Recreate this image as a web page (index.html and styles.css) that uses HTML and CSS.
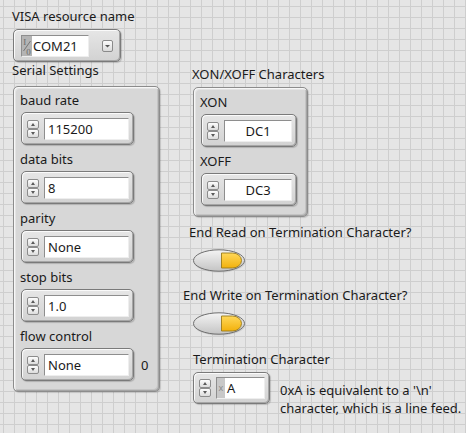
FILE: index.html
```html
<!DOCTYPE html>
<html>
<head>
<meta charset="utf-8">
<link rel="stylesheet" href="styles.css">
</head>
<body>
<div class="panel">
  <div class="left">
    <div class="label">VISA resource name</div>
    <div class="ctl visa">
      <div class="field visa-field">
        <span class="io"><svg width="10" height="20" viewBox="0 0 10 20"><text x="1.2" y="9" class="io-t">I</text><line x1="1.5" y1="15" x2="8.5" y2="5" stroke="#6e6e6e" stroke-width="0.9"/><text x="4.3" y="18.5" class="io-t">0</text></svg></span>
        <span class="txt">COM21</span>
      </div>
      <span class="dd"><svg width="9" height="10" viewBox="0 0 9 10"><path d="M2 4 H7 L4.5 6.6 Z" fill="#555"/></svg></span>
    </div>
    <div class="label">Serial Settings</div>
    <div class="cluster serial">
      <div class="item">
        <div class="label">baud rate</div>
        <div class="ctl num w113"><span class="spin"><b class="btn up"></b><b class="btn down"></b></span><span class="field">115200</span></div>
      </div>
      <div class="item">
        <div class="label">data bits</div>
        <div class="ctl num w113"><span class="spin"><b class="btn up"></b><b class="btn down"></b></span><span class="field">8</span></div>
      </div>
      <div class="item">
        <div class="label">parity</div>
        <div class="ctl num w113"><span class="spin"><b class="btn up"></b><b class="btn down"></b></span><span class="field">None</span></div>
      </div>
      <div class="item">
        <div class="label">stop bits</div>
        <div class="ctl num w113"><span class="spin"><b class="btn up"></b><b class="btn down"></b></span><span class="field">1.0</span></div>
      </div>
      <div class="item">
        <div class="label">flow control</div>
        <div class="row">
          <div class="ctl num w113"><span class="spin"><b class="btn up"></b><b class="btn down"></b></span><span class="field">None</span></div>
          <span class="zero">0</span>
        </div>
      </div>
    </div>
  </div>
  <div class="right">
    <div class="label xlabel">XON/XOFF Characters</div>
    <div class="cluster xon">
      <div class="item">
        <div class="label">XON</div>
        <div class="ctl num w96"><span class="spin"><b class="btn up"></b><b class="btn down"></b></span><span class="field center">DC1</span></div>
      </div>
      <div class="item">
        <div class="label">XOFF</div>
        <div class="ctl num w96"><span class="spin"><b class="btn up"></b><b class="btn down"></b></span><span class="field center">DC3</span></div>
      </div>
    </div>
    <div class="label endread">End Read on Termination Character?</div>
    <div class="toggle"><svg width="54" height="25" viewBox="0 0 54 25">
      <defs>
        <linearGradient id="tg" x1="0" y1="0" x2="0" y2="1"><stop offset="0" stop-color="#f4f4f4"/><stop offset="1" stop-color="#c4c4c4"/></linearGradient>
        <linearGradient id="yg" x1="0" y1="0" x2="0" y2="1"><stop offset="0" stop-color="#ffd85a"/><stop offset="1" stop-color="#f2b10c"/></linearGradient>
      </defs>
      <ellipse cx="26.5" cy="12.5" rx="26" ry="11" fill="#b8b8b8" opacity="0.5"/>
      <ellipse cx="26" cy="11.5" rx="25.5" ry="10.7" fill="url(#tg)" stroke="#6e6e6e" stroke-width="1"/>
      <path d="M28.5 4 H39.5 A 9 7.5 0 0 1 39.5 19 H28.5 Z" fill="url(#yg)" stroke="#9a7a1a" stroke-width="0.9"/>
    </svg></div>
    <div class="label endwrite">End Write on Termination Character?</div>
    <div class="toggle"><svg width="54" height="25" viewBox="0 0 54 25">
      <ellipse cx="26.5" cy="12.5" rx="26" ry="11" fill="#b8b8b8" opacity="0.5"/>
      <ellipse cx="26" cy="11.5" rx="25.5" ry="10.7" fill="url(#tg)" stroke="#6e6e6e" stroke-width="1"/>
      <path d="M28.5 4 H39.5 A 9 7.5 0 0 1 39.5 19 H28.5 Z" fill="url(#yg)" stroke="#9a7a1a" stroke-width="0.9"/>
    </svg></div>
    <div class="label termlabel">Termination Character</div>
    <div class="termrow">
      <div class="ctl num w77"><span class="spin"><b class="btn up"></b><b class="btn down"></b></span><span class="field hex"><span class="radix">x</span>A</span></div>
      <div class="note">0xA is equivalent to a '\n'<br>character, which is a line feed.</div>
    </div>
  </div>
</div>
</body>
</html>
```

FILE: styles.css
```css
* { box-sizing: border-box; }
html, body { margin: 0; padding: 0; }
body {
  width: 466px;
  height: 433px;
  overflow: hidden;
  background-color: #e5e5e5;
  background-image:
    linear-gradient(to right, #cecece 1px, transparent 1px),
    linear-gradient(to bottom, #cecece 1px, transparent 1px);
  background-size: 11px 11px;
  background-position: 3px 6px;
  font-family: "Noto Sans", "Open Sans", sans-serif;
  font-size: 13px;
  color: #1a1a1a;
}
.panel {
  display: flex;
  padding: 8px 0 0 12px;
}
.left {
  width: 148px;
  display: flex;
  flex-direction: column;
}
.label {
  line-height: 16px;
  white-space: nowrap;
}
.ctl {
  display: flex;
  align-items: center;
  height: 33px;
  border: 1px solid #7a7a7a;
  border-radius: 5px;
  background: linear-gradient(#e6e6e6, #d2d2d2);
  box-shadow: inset 1px 1px 0 #fafafa, inset -1px -1px 0 #a6a6a6, 1px 1px 1px rgba(0,0,0,0.18);
}
.visa {
  margin: 5px 0 0 1px;
  width: 108px;
  padding: 0 6px 0 7px;
}
.visa-field {
  display: flex;
  align-items: center;
  width: 68px;
  height: 22px;
  padding: 0;
}
.io {
  width: 10px;
  height: 20px;
  background: #b4b4b4;
  display: block;
  flex: none;
}
.io svg { display: block; }
.io-t {
  font-family: "Liberation Serif", serif;
  font-size: 9px;
  fill: #6a6a6a;
}
.visa-field .txt { padding-left: 1px; }
.dd {
  margin-left: auto;
  margin-right: 1px;
  width: 11px;
  height: 12px;
  border: 1px solid #8a8a8a;
  border-radius: 2px;
  background: linear-gradient(#fbfbfb, #dadada);
  display: flex;
  align-items: center;
  justify-content: center;
}
.dd svg { display: block; }
.cluster {
  border: 1px solid #8c8c8c;
  border-radius: 5px;
  background: #d7d7d7;
  box-shadow: inset 1px 1px 0 #f7f7f7, inset 2px 2px 0 #e4e4e4, inset -1px -1px 0 #a4a4a4, inset -2px -2px 0 #c4c4c4, 1px 1px 1px rgba(0,0,0,0.15);
  display: flex;
  flex-direction: column;
  gap: 6px;
}
.serial {
  margin: 8px 0 0 1px;
  width: 147px;
  height: 306px;
  padding: 5px 0 0 6px;
}
.item {
  display: flex;
  flex-direction: column;
  gap: 4px;
}
.cluster .ctl { margin-left: 1px; }
.num { padding: 0 4px 0 5px; }
.w113 { width: 113px; }
.w96 { width: 96px; }
.w77 { width: 77px; }
.spin {
  display: flex;
  flex-direction: column;
  gap: 0;
  flex: none;
  margin-right: 5px;
}
.btn {
  display: block;
  width: 12px;
  height: 9px;
  border: 1px solid #8c8c8c;
  border-radius: 2px;
  background: linear-gradient(#fdfdfd, #dcdcdc);
  position: relative;
}
.btn::after {
  content: "";
  position: absolute;
  left: 3px;
  width: 0;
  height: 0;
  border-left: 2.5px solid transparent;
  border-right: 2.5px solid transparent;
}
.up::after { top: 2px; border-bottom: 3px solid #5a5a5a; }
.down::after { top: 2px; border-top: 3px solid #5a5a5a; }
.field {
  flex: 1;
  height: 22px;
  background: #fff;
  border-top: 1px solid #8e8e8e;
  border-left: 1px solid #8e8e8e;
  border-bottom: 1px solid #eeeeee;
  border-right: 1px solid #eeeeee;
  padding-left: 3px;
  line-height: 20px;
  white-space: nowrap;
  overflow: hidden;
}
.visa-field {
  flex: none;
  padding-left: 0;
}
.field.center { text-align: center; padding-left: 0; }
.field.hex { padding-left: 0; display: flex; }
.radix {
  width: 8px;
  background: #c8c8c8;
  color: #8a8a8a;
  font-size: 9px;
  text-align: center;
  margin-right: 2px;
}
.row {
  display: flex;
  align-items: center;
}
.zero { margin-left: 7px; }
.right {
  margin-left: 23px;
  padding-top: 58px;
  display: flex;
  flex-direction: column;
  align-items: flex-start;
}
.xlabel { margin-left: 9px; }
.xon {
  margin: 5px 0 0 10px;
  width: 115px;
  height: 130px;
  padding: 6px 0 0 6px;
}
.endread { margin: 7px 0 0 6px; }
.toggle {
  margin: 9px 0 0 10px;
  height: 23px;
}
.toggle svg { display: block; }
.endwrite { margin-top: 15px; }
.termlabel { margin: 16px 0 0 10px; }
.termrow {
  margin: 5px 0 0 10px;
  display: flex;
  align-items: flex-start;
}
.termrow .ctl { height: 32px; }
.note {
  margin: 9px 0 0 10px;
  line-height: 18px;
  white-space: nowrap;
}
```
